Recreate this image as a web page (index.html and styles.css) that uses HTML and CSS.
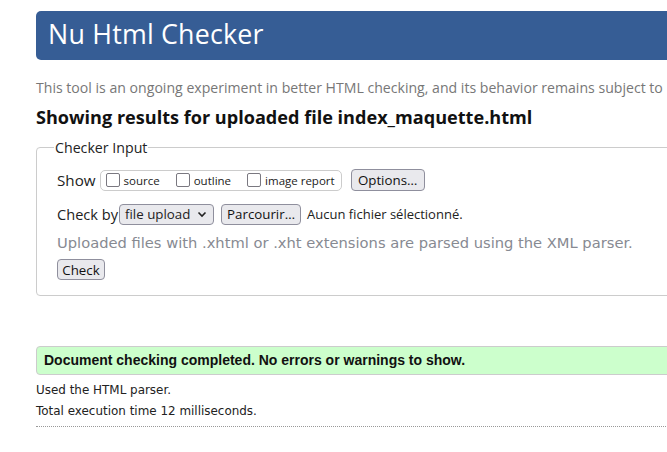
FILE: index.html
```html
<!DOCTYPE html>
<html>
<head>
<meta charset="utf-8">
<link rel="stylesheet" href="styles.css">
</head>
<body>
<div class="page">
  <h1 class="banner">Nu Html Checker</h1>
  <p class="intro">This tool is an ongoing experiment in better HTML checking, and its behavior remains subject to</p>
  <h2 class="results">Showing results for uploaded file index_maquette.html</h2>
  <fieldset class="input">
    <legend>Checker Input</legend>
    <div class="row">
      <span class="lbl">Show</span>
      <div class="opts">
        <label class="opt"><span class="cb"></span>source</label>
        <label class="opt"><span class="cb"></span>outline</label>
        <label class="opt"><span class="cb"></span>image report</label>
      </div>
      <span class="btn btn-opt">Options…</span>
    </div>
    <div class="row row2">
      <span class="lbl">Check by</span>
      <span class="sel">file upload <svg width="10" height="7" viewBox="0 0 10 7"><path d="M1.5 1.5 L5 5 L8.5 1.5" fill="none" stroke="#222" stroke-width="1.6"/></svg></span>
      <span class="btn btn-browse">Parcourir…</span>
      <span class="nofile">Aucun fichier sélectionné.</span>
    </div>
    <p class="note">Uploaded files with .xhtml or .xht extensions are parsed using the XML parser.</p>
    <span class="btn btn-check">Check</span>
  </fieldset>
  <p class="success">Document checking completed. No errors or warnings to show.</p>
  <p class="info">Used the HTML parser.</p>
  <p class="info info2">Total execution time 12 milliseconds.</p>
  <hr class="dots">
</div>
</body>
</html>
```
FILE: styles.css
```css
html, body { margin: 0; padding: 0; background: #fff; overflow: hidden; }
body { width: 667px; height: 452px; }
.page {
  padding: 11px 0 0 36px;
  width: 720px;
  font-family: "Open Sans", "Noto Sans", sans-serif;
  color: #222;
}
.banner {
  margin: 0;
  height: 49px;
  background: #365d95;
  color: #fff;
  font-weight: 400;
  font-size: 26.8px;
  line-height: 46px;
  padding-left: 12px;
  border-radius: 5px 0 0 5px;
  letter-spacing: 0.2px;
}
.intro {
  margin: 18px 0 0 0;
  font-size: 14.1px;
  color: #777;
  line-height: 20px;
  white-space: nowrap;
}
.results {
  margin: 7px 0 0 0;
  font-size: 18.1px;
  font-weight: 700;
  color: #111;
  line-height: 24px;
  white-space: nowrap;
}
.input {
  margin: 9px 0 0 0;
  padding: 12px 20px 15px 20px;
  border: 1px solid #ccc;
  border-radius: 4px 0 0 4px;
  min-width: 0;
}
.input legend {
  font-size: 14.2px;
  padding: 0 1px;
  margin-left: -3px;
  color: #222;
}
.row {
  display: flex;
  align-items: center;
  height: 22px;
  font-size: 15.2px;
}
.lbl { margin-right: 4px; }
.opts {
  display: flex;
  align-items: center;
  height: 19px;
  border: 1px solid #ccc;
  border-radius: 5px;
  padding: 0 6px 0 5px;
  font-size: 11.5px;
  gap: 16px;
}
.opt { display: flex; align-items: center; gap: 4px; }
.cb {
  width: 12px; height: 12px;
  border: 1.5px solid #7a7880;
  border-radius: 2px;
  background: #fff;
}
.btn {
  display: inline-flex;
  align-items: center;
  justify-content: center;
  background: #e9e9ed;
  border: 1px solid #8f8f9d;
  border-radius: 4px;
  font-size: 13.3px;
  color: #111;
  height: 19px;
  box-sizing: border-box;
}
.btn-opt { margin-left: 9px; width: 74px; height: 22px; }
.row2 { margin-top: 12px; }
.row2 .lbl { margin-right: 1px; font-size: 14.6px; }
.sel {
  display: inline-flex;
  align-items: center;
  justify-content: space-between;
  box-sizing: border-box;
  width: 95px; height: 21px;
  padding: 0 6px 0 5px;
  background: #e9e9ed;
  border: 1px solid #8f8f9d;
  border-radius: 4px;
  font-size: 13.3px;
}
.btn-browse { margin-left: 7px; width: 80px; height: 21px; }
.nofile { margin-left: 6px; font-size: 13px; }
.note {
  margin: 9px 0 0 0;
  font-family: "DejaVu Sans", sans-serif;
  font-size: 14.7px;
  color: #878a92;
  line-height: 18px;
  white-space: nowrap;
}
.btn-check { margin-top: 7px; width: 48px; height: 21px; }
.success {
  margin: 50px 0 0 0;
  height: 29px;
  box-sizing: border-box;
  background: #ccffcc;
  border: 1px solid #ccc;
  border-radius: 4px 0 0 4px;
  font-family: "Liberation Sans", Arial, sans-serif;
  font-weight: 700;
  font-size: 14px;
  line-height: 27px;
  padding-left: 7px;
  color: #111;
}
.info {
  margin: 8px 0 0 0;
  font-family: "DejaVu Sans", sans-serif;
  font-size: 11.95px;
  line-height: 14px;
  color: #222;
}
.info2 { margin-top: 7px; }
.dots {
  margin: 8px 0 0 0;
  border: 0;
  border-top: 1px dotted #999;
  height: 0;
}
```
